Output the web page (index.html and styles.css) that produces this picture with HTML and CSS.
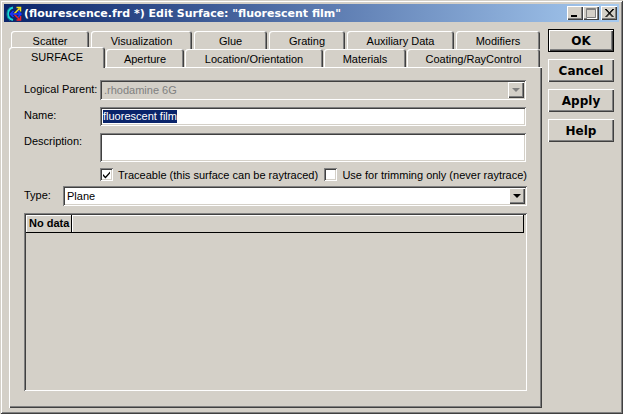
FILE: index.html
```html
<!DOCTYPE html>
<html lang="en">
<head>
<meta charset="utf-8">
<title>Edit Surface</title>
<link rel="stylesheet" href="styles.css">
</head>
<body>
<div class="window">
  <header class="titlebar">
    <svg class="appicon" width="17" height="17" viewBox="0 0 17 17">
      <path d="M7 2.5C3 3.5 2 6 2 9s1 5 5 6" fill="none" stroke="#19d7d7" stroke-width="2"/>
      <path d="M4 2.5C2 4 1 6 1 9s1 5 3 6.500" fill="none" stroke="#0a8f9a" stroke-width="1"/>
      <path d="M8 9L13.500 3.500M10.500 2.500H14.500V6.500" fill="none" stroke="#f4e21a" stroke-width="1.500"/>
      <path d="M8 9L13.500 14.500M10.500 15H14.500V11" fill="none" stroke="#f0202a" stroke-width="1.500"/>
      <path d="M4.500 9H15M7.500 6L4.500 9l3 3M12 6l3 3-3 3" fill="none" stroke="#1a35ff" stroke-width="1.500"/>
    </svg>
    <span class="title">(flourescence.frd *) Edit Surface: "fluorescent film"</span>
    <div class="winbtns">
      <span class="winbtn">
        <svg width="16" height="14" viewBox="0 0 16 14"><rect x="4" y="9" width="6" height="2" fill="#000"/></svg>
      </span>
      <span class="winbtn">
        <svg width="16" height="14" viewBox="0 0 16 14"><path d="M3.500 2.500h9v9h-9zM3.500 3.500h9" fill="none" stroke="#808080"/><path d="M13.500 3v10M4 12.500h9" stroke="#fff" fill="none"/></svg>
      </span>
      <span class="winbtn close">
        <svg width="16" height="14" viewBox="0 0 16 14"><path d="M4 3l7.500 8M5 3l7.500 8M12 3L4.500 11M13 3L5.500 11" stroke="#000" fill="none"/></svg>
      </span>
    </div>
  </header>

  <div class="client">
    <div class="tabarea">
      <div class="tabrow back">
        <div class="tab">Scatter</div>
        <div class="tab">Visualization</div>
        <div class="tab">Glue</div>
        <div class="tab">Grating</div>
        <div class="tab">Auxiliary Data</div>
        <div class="tab">Modifiers</div>
      </div>
      <div class="tabrow front">
        <div class="tab active">SURFACE</div>
        <div class="tab">Aperture</div>
        <div class="tab">Location/Orientation</div>
        <div class="tab">Materials</div>
        <div class="tab">Coating/RayControl</div>
      </div>

      <main class="pane">
        <div class="row parent-row">
          <label class="label">Logical Parent:</label>
          <div class="field combo disabled">
            <span class="fieldtext">.rhodamine 6G</span>
            <span class="dropbtn off"><i class="arrow"></i></span>
          </div>
        </div>
        <div class="row name-row">
          <label class="label">Name:</label>
          <div class="field name"><span class="selected">fluorescent film</span></div>
        </div>
        <div class="row desc-row">
          <label class="label">Description:</label>
          <div class="field desc"></div>
        </div>
        <div class="checks">
          <span class="checkbox">
            <svg width="9" height="9" viewBox="0 0 9 9"><path d="M1 4l2.500 2.500L8 1.500V3.500L3.500 8.500 1 6z" fill="#000"/></svg>
          </span>
          <span class="checktext first">Traceable (this surface can be raytraced)</span>
          <span class="checkbox"></span>
          <span class="checktext">Use for trimming only (never raytrace)</span>
        </div>
        <div class="row type-row">
          <label class="label type-label">Type:</label>
          <div class="field combo">
            <span class="fieldtext">Plane</span>
            <span class="dropbtn"><i class="arrow"></i></span>
          </div>
        </div>
        <div class="grid">
          <div class="gridhead">
            <div class="headcell">No data</div>
            <div class="headrest"></div>
          </div>
        </div>
      </main>
    </div>

    <aside class="buttons">
      <button class="btn default">OK</button>
      <button class="btn">Cancel</button>
      <button class="btn">Apply</button>
      <button class="btn">Help</button>
    </aside>
  </div>
</div>
</body>
</html>
```

FILE: styles.css
```css
* { box-sizing: border-box; }

html, body {
  margin: 0;
  padding: 0;
  background: #d4d0c8;
}

body {
  width: 623px;
  height: 414px;
  overflow: hidden;
  font-family: "Liberation Sans", Arial, sans-serif;
  font-size: 11px;
  color: #000;
}

.window {
  width: 623px;
  height: 414px;
  padding: 4px 3px 0 4px;
  background: #d4d0c8;
  box-shadow: inset 1px 1px 0 #d4d0c8, inset -1px -1px 0 #404040, inset 2px 2px 0 #fff, inset -2px -2px 0 #808080;
}

.titlebar {
  display: flex;
  align-items: center;
  height: 18px;
  width: 615px;
  padding-left: 2px;
  color: #fff;
  background: linear-gradient(90deg, #0a246a 0%, #a6caf0 100%);
}

.appicon {
  flex: none;
  margin-right: 1px;
}

.title {
  font-family: "DejaVu Sans", sans-serif;
  font-weight: bold;
  font-size: 11px;
  white-space: nowrap;
}

.winbtns {
  display: flex;
  margin-left: auto;
  margin-right: 2px;
}

.winbtn {
  display: block;
  width: 16px;
  height: 14px;
  background: #d4d0c8;
  box-shadow: inset 1px 1px 0 #fff, inset -1px -1px 0 #404040, inset -2px -2px 0 #808080;
}

.winbtn svg { display: block; }
.winbtn.close { margin-left: 2px; }

.client {
  display: flex;
  align-items: flex-start;
}

.tabarea {
  width: 533px;
  margin-left: 5px;
  margin-top: 9px;
}

.tabrow {
  display: grid;
  position: relative;
}

.back {
  grid-template-columns: 78px 101px 73px 76px 107px 84px;
  column-gap: 2px;
  height: 18px;
  margin-left: 2px;
}

.front {
  grid-template-columns: 96px 78px 138px 82px 133px;
  column-gap: 1px;
  height: 18px;
  z-index: 1;
}

.tab {
  display: flex;
  align-items: center;
  justify-content: center;
  height: 18px;
  padding-top: 2px;
  background: #d4d0c8;
  border-radius: 3px 3px 0 0;
  box-shadow: inset 1px 1px 0 #fff, inset -1px 0 0 #404040, inset -2px 0 0 #808080;
  white-space: nowrap;
}

.tab.active {
  position: relative;
  height: 21px;
  margin-top: -2px;
  padding-top: 0;
  padding-bottom: 2px;
  box-shadow: inset 1px 1px 0 #fff, inset -1px 0 0 #404040, inset -2px 0 0 #808080;
  z-index: 2;
}

.pane {
  height: 341px;
  padding: 13px 15px 0;
  background: #d4d0c8;
  box-shadow: inset 1px 1px 0 #fff, inset -1px -1px 0 #404040, inset -2px -2px 0 #808080;
}

.row {
  display: flex;
  align-items: flex-start;
}

.label {
  flex: none;
  width: 76px;
  line-height: 13px;
  white-space: nowrap;
}

.field {
  flex: 1;
  min-width: 0;
  background: #fff;
  padding: 2px 3px;
  line-height: 14px;
  box-shadow: inset 1px 1px 0 #808080, inset -1px -1px 0 #fff, inset 2px 2px 0 #404040, inset -2px -2px 0 #d4d0c8;
}

.parent-row { height: 20px; margin-right: 1px; }
.parent-row .label { padding-top: 3px; }

.combo {
  display: flex;
  align-items: center;
  justify-content: space-between;
  height: 20px;
  padding: 2px 2px 2px 4px;
}

.disabled {
  background: #d4d0c8;
  color: #808080;
}

.fieldtext { white-space: nowrap; }

.dropbtn {
  display: flex;
  align-items: center;
  justify-content: center;
  width: 16px;
  height: 16px;
  background: #d4d0c8;
  box-shadow: inset 1px 1px 0 #fff, inset -1px -1px 0 #404040, inset -2px -2px 0 #808080;
}

.arrow {
  display: block;
  width: 0;
  height: 0;
  border-left: 4px solid transparent;
  border-right: 4px solid transparent;
  border-top: 4px solid #000;
}

.dropbtn.off .arrow { border-top-color: #808080; }

.name-row { margin-top: 7px; margin-right: 1px; }
.name-row .label { padding-top: 2px; }
.name { height: 19px; }

.selected {
  display: inline-block;
  background: #0a246a;
  color: #fff;
  height: 13px;
  line-height: 13px;
}

.desc-row { margin-top: 7px; margin-right: 1px; }
.desc-row .label { padding-top: 2px; }
.desc { height: 29px; }

.checks {
  display: flex;
  align-items: center;
  height: 13px;
  margin-top: 6px;
  margin-left: 76px;
}

.checkbox {
  flex: none;
  display: flex;
  align-items: center;
  justify-content: center;
  width: 13px;
  height: 13px;
  background: #fff;
  box-shadow: inset 1px 1px 0 #808080, inset -1px -1px 0 #fff, inset 2px 2px 0 #404040, inset -2px -2px 0 #d4d0c8;
}

.checktext {
  margin-left: 5px;
  white-space: nowrap;
}

.checktext.first { width: 210px; }

.type-row { margin-top: 5px; }
.type-label { width: 39px; padding-top: 3px; }

.grid {
  height: 178px;
  margin-top: 7px;
  padding: 2px 2px 0;
  box-shadow: inset 1px 1px 0 #808080, inset -1px -1px 0 #fff, inset 2px 2px 0 #404040, inset -2px -2px 0 #d4d0c8;
}

.gridhead {
  display: flex;
  height: 18px;
  border-bottom: 1px solid #000;
  margin-right: 1px;
}

.headcell {
  width: 46px;
  padding-left: 3px;
  line-height: 17px;
  font-weight: bold;
  border-right: 1px solid #000;
  box-shadow: inset 1px 1px 0 #fff;
}

.headrest {
  flex: 1;
  border-right: 1px solid #000;
  box-shadow: inset 1px 1px 0 #fff;
}

.buttons {
  display: flex;
  flex-direction: column;
  gap: 7px;
  margin-left: 6px;
  margin-top: 7px;
}

.btn {
  width: 66px;
  height: 23px;
  padding: 0;
  border: 0;
  font-family: "DejaVu Sans", sans-serif;
  font-size: 12px;
  font-weight: bold;
  color: #000;
  background: #d4d0c8;
  box-shadow: inset 1px 1px 0 #fff, inset -1px -1px 0 #404040, inset -2px -2px 0 #808080;
}

.btn.default {
  box-shadow: inset 0 0 0 1px #000, inset 2px 2px 0 #fff, inset -2px -2px 0 #404040, inset -3px -3px 0 #808080;
}
```
